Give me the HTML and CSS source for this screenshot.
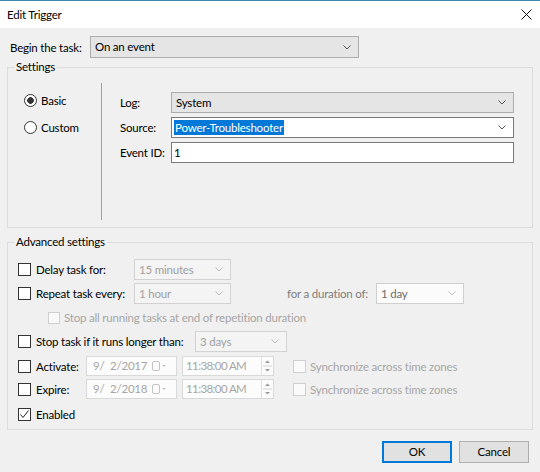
FILE: index.html
```html
<!DOCTYPE html>
<html>
<head>
<meta charset="utf-8">
<title>Edit Trigger</title>
<link rel="stylesheet" href="styles.css">
</head>
<body>
<div class="window">
  <div class="titlebar">
    <span class="title">Edit Trigger</span>
    <svg class="close" width="11" height="11" viewBox="0 0 11 11"><path d="M0.5 0.5L10.5 10.5M10.5 0.5L0.5 10.5" stroke="#111" stroke-width="1" fill="none"/></svg>
  </div>
  <div class="content">
    <div class="begin-row">
      <span class="begin-label">Begin the task:</span>
      <div class="combo combo-ro begin-combo">
        <span class="combo-text">On an event</span>
        <svg class="chev" width="8" height="5" viewBox="0 0 8 5"><polyline points="0.5,0.5 4,4 7.5,0.5" fill="none" stroke="#555" stroke-width="1"/></svg>
      </div>
    </div>

    <div class="group settings">
      <span class="group-title">Settings</span>
      <div class="radios">
        <div class="radio-row"><span class="radio checked"></span><span>Basic</span></div>
        <div class="radio-row"><span class="radio"></span><span>Custom</span></div>
      </div>
      <div class="fields">
        <div class="field">
          <span class="field-label">Log:</span>
          <div class="combo combo-ro field-input">
            <span class="combo-text">System</span>
            <svg class="chev" width="8" height="5" viewBox="0 0 8 5"><polyline points="0.5,0.5 4,4 7.5,0.5" fill="none" stroke="#555" stroke-width="1"/></svg>
          </div>
        </div>
        <div class="field">
          <span class="field-label">Source:</span>
          <div class="combo combo-edit field-input">
            <span class="combo-text"><span class="sel">Power-Troubleshooter</span></span>
            <svg class="chev" width="8" height="5" viewBox="0 0 8 5"><polyline points="0.5,0.5 4,4 7.5,0.5" fill="none" stroke="#555" stroke-width="1"/></svg>
          </div>
        </div>
        <div class="field">
          <span class="field-label">Event ID:</span>
          <div class="textbox field-input"><span class="combo-text">1</span></div>
        </div>
      </div>
    </div>

    <div class="group advanced">
      <span class="group-title">Advanced settings</span>

      <div class="row">
        <span class="cb"></span>
        <span class="row-label w-delay">Delay task for:</span>
        <div class="combo combo-dis w97">
          <span class="combo-text">15 minutes</span>
          <svg class="chev" width="8" height="5" viewBox="0 0 8 5"><polyline points="0.5,0.5 4,4 7.5,0.5" fill="none" stroke="#bbb" stroke-width="1"/></svg>
        </div>
      </div>

      <div class="row">
        <span class="cb"></span>
        <span class="row-label w-delay">Repeat task every:</span>
        <div class="combo combo-dis w97">
          <span class="combo-text">1 hour</span>
          <svg class="chev" width="8" height="5" viewBox="0 0 8 5"><polyline points="0.5,0.5 4,4 7.5,0.5" fill="none" stroke="#bbb" stroke-width="1"/></svg>
        </div>
        <span class="row-label dim duration-label">for a duration of:</span>
        <div class="combo combo-dur w88">
          <span class="combo-text">1 day</span>
          <svg class="chev" width="8" height="5" viewBox="0 0 8 5"><polyline points="0.5,0.5 4,4 7.5,0.5" fill="none" stroke="#bbb" stroke-width="1"/></svg>
        </div>
      </div>

      <div class="row indent">
        <span class="cb cb-dis cb-small"></span>
        <span class="gray">Stop all running tasks at end of repetition duration</span>
      </div>

      <div class="row">
        <span class="cb"></span>
        <span class="row-label w-stop">Stop task if it runs longer than:</span>
        <div class="combo combo-dis w92">
          <span class="combo-text">3 days</span>
          <svg class="chev" width="8" height="5" viewBox="0 0 8 5"><polyline points="0.5,0.5 4,4 7.5,0.5" fill="none" stroke="#bbb" stroke-width="1"/></svg>
        </div>
      </div>

      <div class="row row-date first-date">
        <span class="cb"></span>
        <span class="row-label w-date">Activate:</span>
        <div class="datebox">
          <span class="date-text">9/  2/2017</span>
          <svg class="cal" width="15" height="10" viewBox="0 0 15 10"><rect x="0.5" y="0.5" width="7" height="9" rx="1.5" fill="none" stroke="#c4c4c4"/><polygon points="10,4 14,4 12,6" fill="#c4c4c4"/></svg>
        </div>
        <div class="timebox">
          <span class="date-text time-text">11:38:00 AM</span>
          <span class="spin">
            <svg width="11" height="18" viewBox="0 0 11 18"><polygon points="3,6 8,6 5.5,3.5" fill="#9a9a9a"/><line x1="1" y1="9" x2="10" y2="9" stroke="#d4d4d4"/><polygon points="3,12 8,12 5.5,14.5" fill="#9a9a9a"/></svg>
          </span>
        </div>
        <span class="cb cb-dis sync-cb"></span>
        <span class="gray">Synchronize across time zones</span>
      </div>

      <div class="row row-date">
        <span class="cb"></span>
        <span class="row-label w-date">Expire:</span>
        <div class="datebox">
          <span class="date-text">9/  2/2018</span>
          <svg class="cal" width="15" height="10" viewBox="0 0 15 10"><rect x="0.5" y="0.5" width="7" height="9" rx="1.5" fill="none" stroke="#c4c4c4"/><polygon points="10,4 14,4 12,6" fill="#c4c4c4"/></svg>
        </div>
        <div class="timebox">
          <span class="date-text time-text">11:38:00 AM</span>
          <span class="spin">
            <svg width="11" height="18" viewBox="0 0 11 18"><polygon points="3,6 8,6 5.5,3.5" fill="#9a9a9a"/><line x1="1" y1="9" x2="10" y2="9" stroke="#d4d4d4"/><polygon points="3,12 8,12 5.5,14.5" fill="#9a9a9a"/></svg>
          </span>
        </div>
        <span class="cb cb-dis sync-cb"></span>
        <span class="gray">Synchronize across time zones</span>
      </div>

      <div class="row enabled-row">
        <span class="cb cb-checked">
          <svg width="11" height="11" viewBox="0 0 11 11"><polyline points="1.5,5.5 4,8.5 9.5,1.5" fill="none" stroke="#222" stroke-width="1"/></svg>
        </span>
        <span>Enabled</span>
      </div>
    </div>

    <div class="buttons">
      <div class="btn btn-default">OK</div>
      <div class="btn">Cancel</div>
    </div>
  </div>
</div>
</body>
</html>
```

FILE: styles.css
```css
* { box-sizing: border-box; }

html, body {
  margin: 0;
  padding: 0;
}

body {
  width: 540px;
  height: 472px;
  background: #f0f0f0;
  font-family: Lato, "Noto Sans", "DejaVu Sans", sans-serif;
  font-size: 11.5px;
  letter-spacing: -0.2px;
  color: #000;
  overflow: hidden;
  white-space: nowrap;
}

.window {
  width: 540px;
  height: 472px;
  display: flex;
  flex-direction: column;
}

.titlebar {
  height: 28px;
  background: #fff;
  border-top: 1px solid #3a88b0;
  display: flex;
  align-items: center;
  justify-content: space-between;
  padding: 0 8px 0 7px;
}

.title {
  line-height: 16px;
}

.close {
  display: block;
}

.content {
  display: flex;
  flex-direction: column;
  padding: 0 7px;
}

.begin-row {
  display: flex;
  align-items: center;
  margin-top: 8px;
  height: 22px;
}

.begin-label {
  width: 83px;
  padding-left: 3px;
  flex: none;
}

.combo, .textbox {
  display: flex;
  align-items: center;
  border: 1px solid #adadad;
  background: #e5e5e5;
  height: 21px;
  padding: 0 0 0 4px;
  flex: none;
}

.combo-text {
  flex: 1;
  white-space: nowrap;
  overflow: hidden;
  line-height: 16px;
}

.chev {
  display: block;
  margin-right: 7px;
  flex: none;
}

.begin-combo {
  width: 269px;
  height: 22px;
}

.combo-edit, .textbox {
  background: #fff;
  border-color: #7a7a7a;
  padding-left: 2px;
}

.sel {
  background: #0078d7;
  color: #fff;
  padding: 1px 1px;
}

/* group boxes */
.group {
  position: relative;
  border: 1px solid #dcdcdc;
  width: 526px;
}

.group-title {
  position: absolute;
  top: -9px;
  left: 6px;
  padding: 0 2px;
  background: #f0f0f0;
  line-height: 16px;
}

.settings {
  margin-top: 9px;
  height: 161px;
  display: flex;
}

.radios {
  width: 93px;
  padding: 24px 0 0 16px;
  display: flex;
  flex-direction: column;
  gap: 11px;
}

.radio-row {
  display: flex;
  align-items: center;
  height: 16px;
}

.radio {
  width: 13px;
  height: 13px;
  border: 1px solid #333;
  border-radius: 50%;
  background: #fff;
  margin-right: 4px;
  flex: none;
}

.radio.checked {
  background: radial-gradient(circle, #333 0, #333 3px, #fff 3.6px);
}

.fields {
  flex: 1;
  margin: 15px 0 7px 0;
  border-left: 1px solid #a0a0a0;
  padding: 9px 18px 0 18px;
  display: flex;
  flex-direction: column;
  gap: 4px;
}

.field {
  display: flex;
  align-items: center;
  height: 21px;
}

.field-label {
  width: 51px;
  flex: none;
}

.field-input {
  flex: 1;
}

/* advanced */
.advanced {
  margin-top: 14px;
  height: 188px;
  padding: 16px 0 0 10px;
  display: flex;
  flex-direction: column;
}

.row {
  display: flex;
  align-items: center;
  height: 21px;
  margin-top: 3px;
}

.group-title + .row {
  margin-top: 0;
}

.cb {
  width: 13px;
  height: 13px;
  border: 1px solid #333;
  background: #fff;
  margin-right: 5px;
  flex: none;
  display: flex;
  align-items: center;
  justify-content: center;
}

.cb-dis {
  border-color: #cfcfcf;
  background: #fafafa;
}

.cb-small {
  width: 12px;
  height: 12px;
}

.row-label {
  flex: none;
  white-space: nowrap;
}

.w-delay { width: 98px; }
.w-stop { width: 159px; }
.w-date { width: 50px; }

.combo-dis {
  background: #f4f4f4;
  border-color: #d2d2d2;
  color: #a0a0a0;
}

.combo-dur {
  background: #fbfbfb;
  border-color: #cfcfcf;
  color: #6d6d6d;
}

.w97 { width: 97px; }
.w88 { width: 88px; }
.w92 { width: 92px; }

.dim { color: #7d7d7d; }
.gray { color: #a6a6a6; white-space: nowrap; }

.duration-label {
  margin-left: 56px;
  width: 89px;
}

.indent {
  padding-left: 30px;
}

.indent .cb {
  margin-right: 4px;
}

.first-date {
  margin-top: 4px;
}

.row-date {
  height: 20px;
}

.datebox, .timebox {
  display: flex;
  align-items: center;
  height: 20px;
  border: 1px solid #d9d9d9;
  background: #fcfcfc;
  color: #a6a6a6;
  padding-left: 6px;
  flex: none;
}

.datebox {
  width: 91px;
}

.timebox {
  width: 92px;
  margin-left: 5px;
  padding-left: 3px;
}

.date-text {
  flex: 1;
  white-space: pre;
  line-height: 16px;
}

.time-text {
  letter-spacing: -0.6px;
}

.cal {
  display: block;
  margin-right: 9px;
}

.spin {
  display: flex;
  align-items: center;
  width: 12px;
  height: 18px;
  border-left: 1px solid #e0e0e0;
}

.spin svg { display: block; }

.sync-cb {
  margin-left: 19px;
  margin-right: 4px;
}

.enabled-row {
  margin-top: 5px;
}

.cb-checked svg { display: block; }

/* buttons */
.buttons {
  display: flex;
  justify-content: flex-end;
  gap: 7px;
  margin-top: 11px;
  padding-right: 4px;
}

.btn {
  width: 70px;
  height: 22px;
  border: 1px solid #adadad;
  background: #e1e1e1;
  display: flex;
  align-items: center;
  justify-content: center;
  line-height: 16px;
}

.btn-default {
  border-color: #0078d7;
  box-shadow: inset 0 0 0 1px #0078d7;
}
```
